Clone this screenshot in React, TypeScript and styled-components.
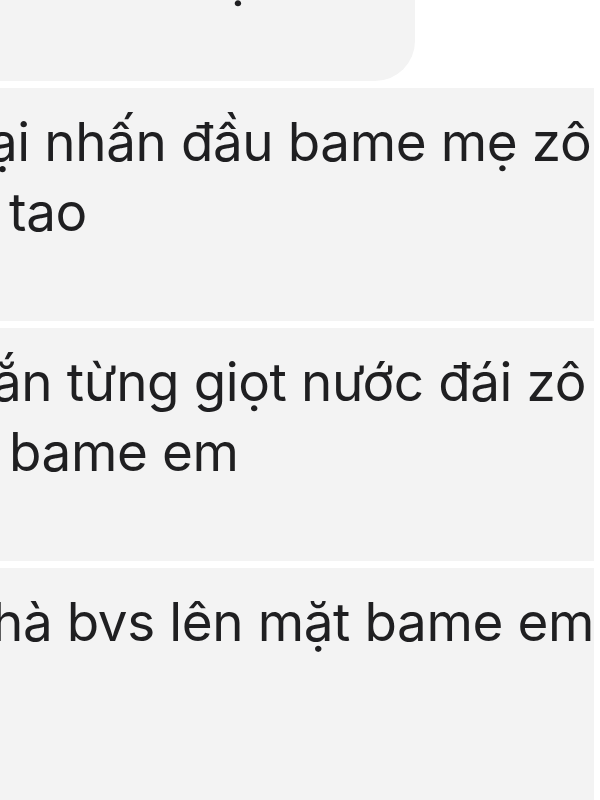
import React from 'react'
import styled, { createGlobalStyle } from 'styled-components'

const GlobalStyle = createGlobalStyle`
  html, body {
    margin: 0;
    padding: 0;
    background: #ffffff;
  }
  body {
    width: 600px;
    height: 800px;
    overflow: hidden;
    font-family: Inter, "Noto Sans", "Liberation Sans", sans-serif;
    color: #1f1f21;
  }
`

const Thread = styled.div`
  display: flex;
  flex-direction: column;
  gap: 7px;
  width: 600px;
`

const PrevBubble = styled.div`
  width: 415px;
  height: 81px;
  background: #f3f3f3;
  border-bottom-right-radius: 40px;
  overflow: hidden;
`

const Message = styled.div`
  width: 594px;
  height: 233px;
  box-sizing: border-box;
  padding-top: 19px;
  background: #f3f3f3;
  overflow: hidden;
`

const Line = styled.div<{ $indent: number }>`
  margin-left: ${(p) => p.$indent}px;
  font-size: 53px;
  line-height: 70px;
  letter-spacing: -0.4px;
  white-space: nowrap;
`

const TailLine = styled(Line)`
  margin-top: -58px;
`

const messages = [
  { lines: [{ text: 'ại nhấn đầu bame mẹ zô', indent: -12 }, { text: 'tao', indent: 9 }] },
  { lines: [{ text: 'ắn từng giọt nước đái zô', indent: -8 }, { text: 'bame em', indent: 9 }] },
  { lines: [{ text: 'hà bvs lên mặt bame em', indent: -8 }] },
]

const App = () => {
  return (
    <>
      <GlobalStyle />
      <Thread>
        <PrevBubble>
          <TailLine $indent={222}>ọ</TailLine>
        </PrevBubble>
        {messages.map((m, i) => (
          <Message key={i}>
            {m.lines.map((l, j) => (
              <Line key={j} $indent={l.indent}>
                {l.text}
              </Line>
            ))}
          </Message>
        ))}
      </Thread>
    </>
  )
}

export default App
